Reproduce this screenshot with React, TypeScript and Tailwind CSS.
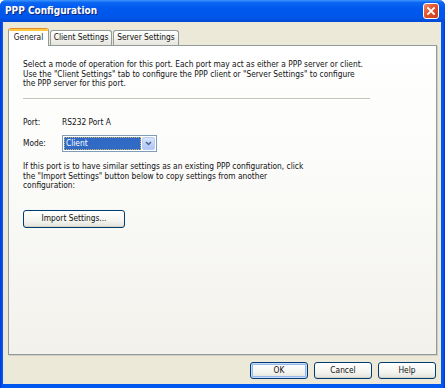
import React from "react";

function XpButton({ label, width, isDefault }: { label: string; width: string; isDefault?: boolean }) {
  return (
    <div
      className={
        "flex items-center justify-center rounded-[3px] border border-[#003C74] bg-[linear-gradient(to_bottom,#FFFFFF_0%,#F4F4F0_60%,#E3E2DA_100%)] " +
        width +
        (isDefault ? " shadow-[inset_0_0_0_1px_#C9DAF7,inset_0_0_0_2px_#96B8EE]" : " shadow-[inset_0_-1px_0_#D6D0C5]")
      }
    >
      <span className="leading-[9px]">{label}</span>
    </div>
  );
}

export default function App() {
  return (
    <div className="w-[445px] h-[388px] flex flex-col bg-[linear-gradient(to_right,#0831D9_0px,#0058EE_2px,#0058EE_443px,#0831D9_445px)] rounded-t-[6px] overflow-hidden font-['DejaVu_Sans_Condensed','DejaVu_Sans',sans-serif] text-[8.3px] leading-[9.5px] text-[#111]">
      {/* Title bar */}
      <div className="h-[22px] shrink-0 flex items-center pl-[5px] pr-[6px] bg-[linear-gradient(to_bottom,#3D95FF_0%,#0A66F2_12%,#0058EE_40%,#0056EA_80%,#0049D4_100%)]">
        <span className="text-white font-bold text-[10px] leading-[12px] font-['DejaVu_Sans_Condensed',sans-serif] [text-shadow:1px_1px_0_#0A247A]">
          PPP Configuration
        </span>
        <div className="ml-auto w-[16px] h-[16px] rounded-[3px] border border-white bg-[linear-gradient(135deg,#F08A6A_0%,#E2542D_45%,#C7391A_100%)] flex items-center justify-center">
          <svg width="10" height="10" viewBox="0 0 10 10">
            <path d="M2 2 L8 8 M8 2 L2 8" stroke="white" strokeWidth="1.8" strokeLinecap="square" />
          </svg>
        </div>
      </div>

      {/* Body */}
      <div className="flex-1 ml-[3px] mr-[4px] mb-[4px] bg-[#ECE9D8] flex flex-col pt-[6px] pl-[5px] pr-[4px]">
        {/* Tabs */}
        <div className="h-[17px] flex items-end shrink-0">
          <div className="relative z-10 -mb-px h-[18px] w-[41px] bg-white border-x border-[#919B9C] rounded-t-[3px] overflow-hidden flex flex-col">
            <div className="h-[1px] bg-[#E68B2C]" />
            <div className="h-[2px] bg-[#FFC73C]" />
            <div className="flex-1 flex items-center justify-center pb-[2px]">General</div>
          </div>
          <div className="h-[15px] w-[62px] ml-[1px] border border-b-0 border-[#919B9C] rounded-t-[3px] bg-[linear-gradient(to_bottom,#FFFFFF_0%,#F3F3EF_50%,#E6E5DD_100%)] flex items-center justify-center">
            Client Settings
          </div>
          <div className="h-[15px] w-[66px] ml-[1px] border border-b-0 border-[#919B9C] rounded-t-[3px] bg-[linear-gradient(to_bottom,#FFFFFF_0%,#F3F3EF_50%,#E6E5DD_100%)] flex items-center justify-center">
            Server Settings
          </div>
        </div>

        {/* Panel */}
        <div className="h-[310px] w-[429px] shrink-0 border border-[#919B9C] shadow-[1px_1px_0_#D1CFC2] bg-[linear-gradient(to_bottom,#FFFFFF_0%,#FBFBF9_40%,#F2F1EC_100%)] pl-[14px] pt-[14px] flex flex-col">
          <div className="whitespace-nowrap">
            Select a mode of operation for this port. Each port may act as either a PPP server or client.
            <br />
            Use the "Client Settings" tab to configure the PPP client or "Server Settings" to configure
            <br />
            the PPP server for this port.
          </div>
          <div className="mt-[9px] w-[347px] h-[2px] border-t border-[#C5C3B8] border-b border-b-white" />

          <div className="mt-[18px] flex">
            <span className="w-[39px]">Port:</span>
            <span>RS232 Port A</span>
          </div>

          <div className="mt-[8px] flex items-center h-[17px]">
            <span className="w-[39px]">Mode:</span>
            <div className="w-[95px] h-[17px] border border-[#7F9DB9] bg-white p-[1px] flex gap-[1px]">
              <div className="flex-1 bg-[#316AC5] text-white flex items-center pl-[2px] outline outline-1 outline-dotted outline-[#C9B46A] -outline-offset-1">
                Client
              </div>
              <div className="w-[13px] rounded-[2px] border border-[#B9CCF6] bg-[linear-gradient(to_bottom,#D9E5FD_0%,#C1D3FB_50%,#B0C6F5_100%)] flex items-center justify-center">
                <svg width="7" height="5" viewBox="0 0 7 5">
                  <path d="M1 1 L3.5 3.5 L6 1" stroke="#4D6185" strokeWidth="1.5" fill="none" />
                </svg>
              </div>
            </div>
          </div>

          <div className="mt-[10px] whitespace-nowrap">
            If this port is to have similar settings as an existing PPP configuration, click
            <br />
            the "Import Settings" button below to copy settings from another
            <br />
            configuration:
          </div>

          <div className="mt-[19px]">
            <XpButton label="Import Settings..." width="w-[102px] h-[18px]" />
          </div>
        </div>

        {/* Bottom buttons */}
        <div className="mt-[7px] flex justify-end gap-[6px] pr-[1px]">
          <XpButton label="OK" width="w-[58px] h-[17px]" isDefault />
          <XpButton label="Cancel" width="w-[58px] h-[17px]" />
          <XpButton label="Help" width="w-[58px] h-[17px]" />
        </div>
      </div>
    </div>
  );
}
